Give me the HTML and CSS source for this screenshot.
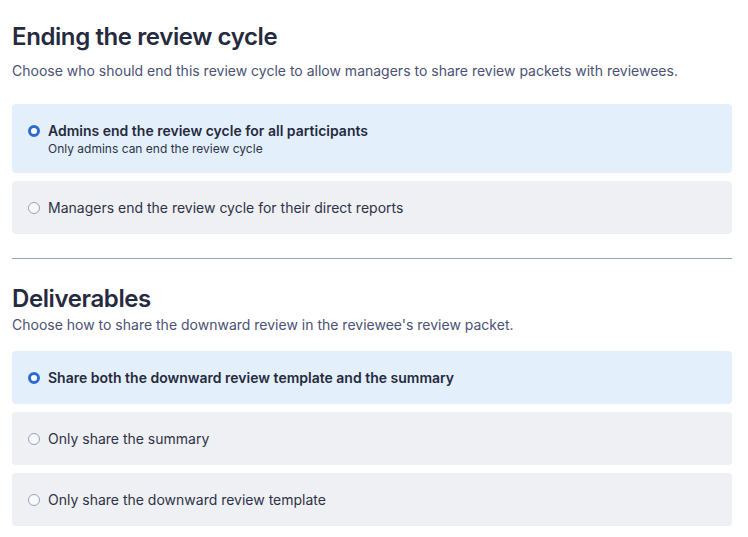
FILE: index.html
```html
<!DOCTYPE html>
<html lang="en">
<head>
<meta charset="utf-8">
<link rel="stylesheet" href="styles.css">
</head>
<body>
<main class="page">
  <section class="section">
    <h1 class="title">Ending the review cycle</h1>
    <p class="desc desc-first">Choose who should end this review cycle to allow managers to share review packets with reviewees.</p>
    <div class="options">
      <label class="option selected">
        <span class="radio"></span>
        <span class="text">
          <span class="label">Admins end the review cycle for all participants</span>
          <span class="help">Only admins can end the review cycle</span>
        </span>
      </label>
      <label class="option">
        <span class="radio"></span>
        <span class="text"><span class="label">Managers end the review cycle for their direct reports</span></span>
      </label>
    </div>
  </section>
  <hr class="divider">
  <section class="section">
    <h1 class="title">Deliverables</h1>
    <p class="desc desc-second">Choose how to share the downward review in the reviewee's review packet.</p>
    <div class="options">
      <label class="option selected">
        <span class="radio"></span>
        <span class="text"><span class="label">Share both the downward review template and the summary</span></span>
      </label>
      <label class="option">
        <span class="radio"></span>
        <span class="text"><span class="label">Only share the summary</span></span>
      </label>
      <label class="option">
        <span class="radio"></span>
        <span class="text"><span class="label">Only share the downward review template</span></span>
      </label>
    </div>
  </section>
</main>
</body>
</html>
```

FILE: styles.css
```css
* { box-sizing: border-box; }
html, body { margin: 0; padding: 0; background: #ffffff; }
body {
  font-family: Inter, "Noto Sans", "Liberation Sans", sans-serif;
  color: #2b2f45;
}
.page {
  width: 720px;
  margin-left: 12px;
  padding-top: 21px;
}
.title {
  margin: 0;
  font-size: 24px;
  line-height: 32px;
  font-weight: 600;
  color: #262a3e;
  letter-spacing: -0.4px;
}
.desc {
  margin: 0;
  font-size: 14px;
  line-height: 20px;
  color: #4b5175;
}
.desc-first { margin-top: 8px; margin-bottom: 23px; }
.desc-second { margin-top: 0; margin-bottom: 16px; }
.options {
  display: flex;
  flex-direction: column;
  gap: 8px;
}
.option {
  display: flex;
  align-items: flex-start;
  gap: 8px;
  padding: 16px;
  background: #eff0f4;
  border-radius: 4px;
}
.option.selected { background: #e3f0fb; }
.radio {
  flex: none;
  width: 12px;
  height: 12px;
  margin-top: 4.5px;
  border-radius: 50%;
  border: 1px solid #98a2bf;
  background: #f8f9fb;
}
.selected .radio {
  border: 3.5px solid #2d6bd1;
  background: #ffffff;
}
.text { display: flex; flex-direction: column; }
.label {
  font-size: 14px;
  line-height: 21px;
  color: #2e3247;
}
.selected .label { font-weight: 600; color: #262a3e; }
.help {
  font-size: 12px;
  line-height: 16px;
  color: #2e3247;
}
.divider {
  margin: 24px 0 24px 0;
  border: 0;
  height: 1px;
  background: #97a3be;
}
```
